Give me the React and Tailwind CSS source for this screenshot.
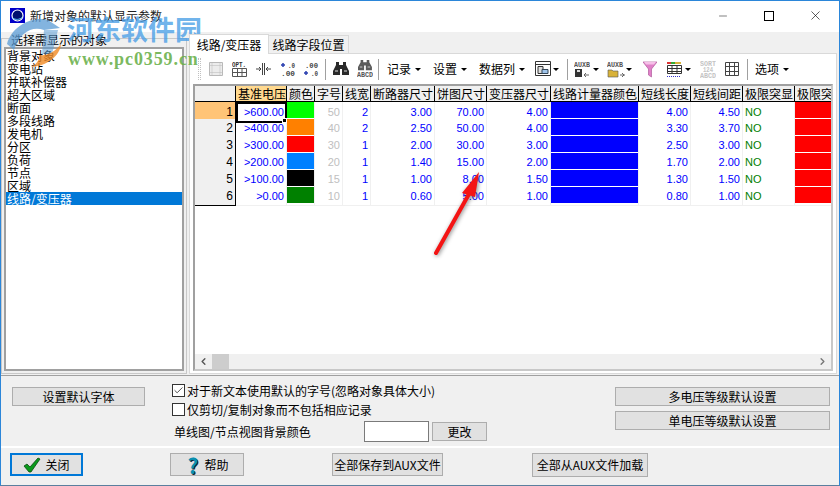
import { X, Minus, Check, ChevronLeft, ChevronRight } from 'lucide-react';

const CJK = "font-['Noto_Sans_CJK_SC','Liberation_Sans',sans-serif]";
const NUM = "font-['Liberation_Sans','Noto_Sans_CJK_SC',sans-serif]";

const LIST = ['背景对象', '变电站', '并联补偿器', '超大区域', '断面', '多段线路', '发电机', '分区', '负荷', '节点', '区域', '线路/变压器'];

const HEADERS = ['', '基准电压', '颜色', '字号', '线宽', '断路器尺寸', '饼图尺寸', '变压器尺寸', '线路计量器颜色', '短线长度', '短线间距', '极限突显', '极限突'];

const ROWS = [
  ['>600.00', '#00ff00', '50', '2', '3.00', '70.00', '4.00', '4.00', '4.50'],
  ['>400.00', '#ff8000', '40', '2', '2.50', '50.00', '4.00', '3.30', '3.70'],
  ['>300.00', '#ff0000', '30', '1', '2.00', '30.00', '3.00', '2.50', '3.00'],
  ['>200.00', '#0080ff', '20', '1', '1.40', '15.00', '2.00', '1.70', '2.00'],
  ['>100.00', '#000000', '15', '1', '1.00', '8.00', '1.50', '1.30', '1.50'],
  ['>0.00', '#008000', '10', '1', '0.60', '5.00', '1.00', '0.80', '1.00'],
];

const GRID_COLS = 'grid grid-cols-[41px_51px_28px_28px_28px_64px_52px_64px_88px_52px_52px_52px_37px]';

function Btn({ className = '', children }) {
  return (
    <div className={`flex items-center justify-center border border-[#adadad] bg-[#e1e1e1] text-[12px] text-black ${className}`}>
      {children}
    </div>
  );
}

function Caret({ className = 'ml-[4px]' }) {
  return <span className={`inline-block shrink-0 border-x-[3px] border-t-[3px] border-x-transparent border-t-black ${className}`} />;
}

function Sep({ className = '' }) {
  return <span className={`h-[21px] w-px shrink-0 bg-[#a0a0a0] ${className}`} />;
}

function Micro({ x = 0, y, w, size = 8, fill = '#444', children }) {
  return (
    <text x={x} y={y} fontSize={size} fontWeight="700" fill={fill} stroke="none" fontFamily="Liberation Mono" textLength={w} lengthAdjust="spacingAndGlyphs">
      {children}
    </text>
  );
}

function Binoculars({ sub }) {
  const c = sub ? '#5a5a5a' : '#2a2a2a';
  return (
    <svg width="16" height="18" viewBox="0 0 16 18">
      <g transform={sub ? 'translate(1 0) scale(.87 .78)' : 'translate(0 2)'}>
        <path d="M3 0h3v3h4V0h3v3l3 6v4H9V7H7v6H0V9l3-6z" fill={c} />
        <path d="M2 9h3M11 9h3" stroke="#ddd" />
      </g>
      {sub && <Micro y={17} w={16} size={7} fill="#555">ABCD</Micro>}
    </svg>
  );
}

function Toolbar() {
  return (
    <div className={`flex h-[30px] items-center pl-[8px] text-[12px] text-black ${CJK}`}>
      <span className="h-[22px] w-[3px] shrink-0 border-x border-dotted border-[#c0c0c0]" />
      <svg className="ml-[7px] shrink-0" width="16" height="16" viewBox="0 0 16 16" fill="#ececec" stroke="#b9b9b9">
        <path d="M1.500 1.500h13v13h-13z" />
        <path d="M1.500 4.500h13M1.500 11.500h13M4 1.500v13M12 1.500v13" strokeDasharray="1 1" />
      </svg>
      <svg className="ml-[8px] shrink-0" width="16" height="16" viewBox="0 0 16 16" fill="none" stroke="#555">
        <Micro y={6} w={14} size={7} fill="#333">OPT.</Micro>
        <path d="M.5 7.500h14v8H.5zM.5 11.500h14M5.500 7.500v8M10 7.500v8" />
      </svg>
      <svg className="ml-[7px] shrink-0" width="16" height="14" viewBox="0 0 16 14" fill="none" stroke="#444">
        <path d="M7.500 1v12M9.500 1v12M1 7h5M11 7h5M4 5l2 2-2 2M13 5l-2 2 2 2" />
      </svg>
      <svg className="ml-[9px] shrink-0" width="16" height="14" viewBox="0 0 16 14">
        <path d="M3 1v4M1 3h4" stroke="#2a3fb0" strokeWidth="1.500" />
        <Micro x={8} y={6} w={7} size={8}>.0</Micro>
        <Micro x={1} y={14} w={14} size={8}>.00</Micro>
      </svg>
      <svg className="ml-[7px] shrink-0" width="16" height="14" viewBox="0 0 16 14">
        <path d="M3 9v4M1 11h4" stroke="#2a3fb0" strokeWidth="1.500" />
        <Micro x={2} y={6} w={13} size={8}>.00</Micro>
        <Micro x={8} y={14} w={7} size={8}>.0</Micro>
      </svg>
      <Sep className="ml-[6px]" />
      <span className="ml-[7px] shrink-0"><Binoculars /></span>
      <span className="ml-[8px] shrink-0"><Binoculars sub /></span>
      <Sep className="ml-[5px]" />
      <span className="ml-[8px] shrink-0">记录</span>
      <Caret />
      <span className="ml-[12px] shrink-0">设置</span>
      <Caret />
      <span className="ml-[12px] shrink-0">数据列</span>
      <Caret />
      <svg className="ml-[10px] shrink-0" width="16" height="16" viewBox="0 0 16 16" fill="none" stroke="#333">
        <path d="M.5 .5h15v14H.5zM.5 3.500h15" />
        <path d="M3 5.500h5v7H3z" fill="#ddd" />
        <path d="M7 8.500h6v4H7z" fill="#9fc4ea" stroke="#345" />
      </svg>
      <Caret className="ml-[2px]" />
      <Sep className="ml-[8px]" />
      <svg className="ml-[6px] shrink-0" width="16" height="17" viewBox="0 0 16 17">
        <Micro y={6} w={16} fill="#555">AUXB</Micro>
        <path d="M1 8h7v8H1z" fill="#333" />
        <path d="M3 9h3v2H3z" fill="#ddd" />
        <path d="M10 14h5M12 12l-2 2 2 2" stroke="#666" fill="none" />
      </svg>
      <Caret className="ml-[3px]" />
      <svg className="ml-[8px] shrink-0" width="18" height="17" viewBox="0 0 18 17">
        <Micro y={6} w={16} fill="#555">AUXB</Micro>
        <path d="M1 9h4l1 1h5v6H1z" fill="#d8b23a" stroke="#555" strokeWidth=".6" />
        <path d="M13 14h5M15 12l2 2-2 2" stroke="#666" fill="none" />
      </svg>
      <Caret className="ml-[1px]" />
      <svg className="ml-[11px] shrink-0" width="14" height="17" viewBox="0 0 14 17">
        <path d="M0 1h14L8.500 8v8l-3-2V8z" fill="#e080c8" stroke="#b05a9c" strokeWidth=".7" />
        <path d="M1 1h12l-2 2.500H3z" fill="#f6c0e8" />
      </svg>
      <svg className="ml-[10px] shrink-0" width="15" height="17" viewBox="0 0 15 17" fill="none" stroke="#333">
        <path d="M0 2h4" stroke="#d33" strokeWidth="2" />
        <path d="M4 2h4" stroke="#3a3" strokeWidth="2" />
        <path d="M8 2h6" stroke="#d8b23a" strokeWidth="2" />
        <path d="M.5 4.500h14v8H.5zM.5 7.500h14M.5 10.500h14M5 4.500v8M10 4.500v8" />
        <path d="M0 15.500h14" stroke="#33c" strokeDasharray="1 1" />
      </svg>
      <Caret className="ml-[3px]" />
      <svg className="ml-[9px] shrink-0" width="16" height="18" viewBox="0 0 16 18">
        <Micro y={5.500} w={16} size={7} fill="#c4c4c4">SORT</Micro>
        <Micro x={3} y={11.500} w={10} size={7} fill="#c4c4c4">124</Micro>
        <Micro y={17.500} w={16} size={7} fill="#c4c4c4">ABCD</Micro>
      </svg>
      <svg className="ml-[9px] shrink-0" width="14" height="14" viewBox="0 0 14 14" fill="none" stroke="#444">
        <path d="M.5 .5h13v13H.5zM.5 4.500h13M.5 9.500h13M4.500 .5v13M9.500 .5v13" />
      </svg>
      <Sep className="ml-[8px]" />
      <span className="ml-[7px] shrink-0">选项</span>
      <Caret />
    </div>
  );
}

function Num({ children, cls = 'text-[#0000ff]' }) {
  return (
    <div className={`flex items-center justify-end border-r border-b border-[#f0f0f0] bg-white pr-[2px] text-[11px] ${NUM} ${cls}`}>
      {children}
    </div>
  );
}

function Swatch({ color }) {
  return (
    <div className="border-r border-b border-[#f0f0f0] bg-white">
      <div className="h-[16px] w-full" style={{ backgroundColor: color }} />
    </div>
  );
}

function DataGrid() {
  return (
    <div className="mx-[3px] flex min-h-0 flex-1 flex-col border-2 border-[#a0a0a0] border-r-[#c8c8c8] border-b-[#c8c8c8] bg-white">
      <div className="min-h-0 flex-1 overflow-hidden">
        <div className={`${GRID_COLS} h-[16px] text-[12px] leading-[15px] text-black ${CJK}`}>
          {HEADERS.map((h, i) => (
            <div
              key={i}
              className={`overflow-hidden border-b border-black pl-[2px] whitespace-nowrap ${i === 1 ? 'bg-[#ffd98f]' : 'bg-[#f0f0f0]'} ${i === 12 ? '' : 'border-r'}`}
            >
              {h}
            </div>
          ))}
        </div>
        {ROWS.map((r, i) => (
          <div key={i} className={`${GRID_COLS} h-[17px]`}>
            <div className={`flex items-center justify-end border-r border-b border-black pr-[2px] text-[12px] text-black ${NUM} ${i === 0 ? 'bg-[#ffc477]' : 'bg-[#f0f0f0]'}`}>
              {i + 1}
            </div>
            {i === 0 ? (
              <div className={`relative flex items-center justify-end border-2 border-black bg-white pr-[1px] text-[11px] text-[#0000ff] ${NUM}`}>
                {r[0]}
                <span className="absolute -right-[2px] -bottom-[2px] h-[5px] w-[5px] border border-white bg-black" />
              </div>
            ) : (
              <Num>{r[0]}</Num>
            )}
            <Swatch color={r[1]} />
            <Num cls="text-[#c0c0c0]">{r[2]}</Num>
            <Num>{r[3]}</Num>
            <Num>{r[4]}</Num>
            <Num>{r[5]}</Num>
            <Num>{r[6]}</Num>
            <Swatch color="#0000ff" />
            <Num>{r[7]}</Num>
            <Num>{r[8]}</Num>
            <div className={`flex items-center border-r border-b border-[#f0f0f0] bg-white pl-[2px] text-[11px] text-[#008000] ${NUM}`}>NO</div>
            <Swatch color="#ff0000" />
          </div>
        ))}
      </div>
      <div className="flex h-[15px] shrink-0 items-center bg-[#f0f0f0]">
        <span className="flex h-[15px] w-[17px] items-center justify-center"><ChevronLeft size={11} strokeWidth={3} color="#555" /></span>
        <span className="h-[15px] w-[17px] bg-[#cdcdcd]" />
        <span className="flex-1" />
        <span className="flex h-[15px] w-[17px] items-center justify-center"><ChevronRight size={11} strokeWidth={3} color="#777" /></span>
      </div>
    </div>
  );
}

function TitleBar() {
  return (
    <div className="flex h-[32px] shrink-0 items-center border-t border-[#2b86d9] bg-white pb-[2px]">
      <svg className="ml-[9px]" width="15" height="15" viewBox="0 0 15 15">
        <path d="M0 0h15v15H0z" fill="#0000c8" />
        <circle cx="7.500" cy="7.500" r="5.500" fill="#001070" stroke="#fff" strokeWidth="1.200" />
        <path d="M2.500 10c3 2 7 2 10-1" stroke="#6cf" fill="none" />
      </svg>
      <span className={`ml-[5px] text-[12px] text-[#222] ${CJK}`}>新增对象的默认显示参数</span>
      <div className="ml-auto flex h-full pr-[1px]">
        <span className="flex w-[46px] items-center justify-center"><Minus size={12} strokeWidth={1} color="#000" /></span>
        <span className="flex w-[46px] items-center justify-center"><span className="h-[10px] w-[10px] border border-black" /></span>
        <span className="flex w-[46px] items-center justify-center"><X size={15} strokeWidth={1} color="#000" /></span>
      </div>
    </div>
  );
}

function Watermark() {
  return (
    <div className="pointer-events-none absolute top-[12px] left-[3px] h-[58px] w-[200px]">
      <svg className="absolute top-0 left-0" width="62" height="58" viewBox="0 0 62 58">
        <path d="M3 32C8 14 28 4 44 8l12 8-16 2C28 14 16 20 10 38z" fill="#5a9bd4" opacity=".75" />
        <path d="M40 18h14l-6 24h-10z" fill="#5a9bd4" opacity=".55" />
        <path d="M57 32c-1 12-14 22-30 23 6-3 9-8 8-12 8 1 16-3 22-11z" fill="#f08a24" opacity=".8" />
      </svg>
      <span className={`absolute top-0 left-[63px] text-[27px] leading-[34px] font-bold whitespace-nowrap text-[#4a9fe6]/80 ${CJK}`}>河东软件园</span>
      <span className="absolute top-[37px] left-[64px] font-['Liberation_Serif',serif] text-[18px] leading-[20px] font-bold tracking-[0.9px] whitespace-nowrap text-[#6ab04a]/90">www.pc0359.cn</span>
    </div>
  );
}

export default function App() {
  return (
    <div className={`relative flex h-[486px] w-[840px] flex-col overflow-hidden border-x border-b border-[#2b86d9] border-b-[#5a7f9e] bg-[#f0f0f0] ${CJK}`}>
      <TitleBar />
      <div className="flex h-[344px] shrink-0 border-b border-[#a0a0a0] pb-[1px]">
        {/* object list */}
        <div className="flex w-[186px] shrink-0 flex-col pt-[6px]">
          <div className="relative flex flex-1 flex-col border border-[#c8c8c8] px-[2px] pt-[8px] pb-[2px]">
            <span className="absolute -top-[6px] left-[7px] bg-[#f0f0f0] px-[2px] text-[12px] leading-[13px] text-black">选择需显示的对象</span>
            <div className="flex-1 border-2 border-[#a0a0a0] bg-white text-[12px] text-black">
              {LIST.map((name, i) => (
                <div key={name} className={`h-[13px] pl-[1px] leading-[13px] ${i === LIST.length - 1 ? 'bg-[#0078d7] text-white' : ''}`}>{name}</div>
              ))}
            </div>
          </div>
        </div>
        {/* tabbed grid */}
        <div className="mr-[2px] ml-[2px] flex min-w-0 flex-1 flex-col pt-[1px]">
          <div className="flex h-[20px] shrink-0 items-end text-[12px] text-black">
            <span className="z-10 -mb-px flex h-[20px] w-[80px] items-center justify-center border-x border-t border-[#d9d9d9] bg-white">线路/变压器</span>
            <span className="flex h-[18px] w-[80px] items-center justify-center border-t border-r border-[#d9d9d9] bg-[#f0f0f0]">线路字段位置</span>
          </div>
          <div className="flex min-h-0 flex-1 flex-col border border-[#d9d9d9] bg-white pb-[2px]">
            <Toolbar />
            <DataGrid />
          </div>
        </div>
      </div>
      {/* options */}
      <div className="flex h-[72px] shrink-0 border-b-2 border-white">
        <div className="w-[165px] shrink-0 pt-[11px] pl-[11px]">
          <Btn className="h-[19px] w-[133px]">设置默认字体</Btn>
        </div>
        <div className="flex w-[440px] shrink-0 flex-col pt-[5px] text-[12px] text-black">
          <label className="ml-[6px] flex h-[19px] items-center gap-[2px]">
            <span className="flex h-[13px] w-[13px] items-center justify-center border border-[#333] bg-white"><Check size={11} strokeWidth={2} color="#444" /></span>
            对于新文本使用默认的字号(忽略对象具体大小)
          </label>
          <label className="ml-[6px] flex h-[19px] items-center gap-[2px]">
            <span className="h-[13px] w-[13px] border border-[#333] bg-white" />
            仅剪切/复制对象而不包括相应记录
          </label>
          <div className="mt-[2px] flex items-center pl-[8px]">
            <span className="w-[190px]">单线图/节点视图背景颜色</span>
            <span className="h-[21px] w-[65px] border border-[#7a7a7a] bg-white" />
            <Btn className="ml-[3px] h-[19px] w-[55px]">更改</Btn>
          </div>
        </div>
        <div className="ml-[9px] flex flex-col gap-[5px] pt-[11px]">
          <Btn className="h-[19px] w-[215px]">多电压等级默认设置</Btn>
          <Btn className="h-[19px] w-[215px]">单电压等级默认设置</Btn>
        </div>
      </div>
      {/* bottom buttons */}
      <div className="flex flex-1 items-start pt-[5px]">
        <Btn className="ml-[9px] h-[23px] w-[73px] gap-[4px] border-2 !border-[#0078d7]">
          <svg width="18" height="16" viewBox="0 0 18 16"><path d="M1 9l3-2 3 3 8-9 2 1-9 13H6z" fill="#0a9a1c" stroke="#0a4a10" strokeWidth=".8" /></svg>
          关闭
        </Btn>
        <Btn className="ml-[87px] h-[23px] w-[74px] gap-[6px] pl-[2px]">
          <span className="text-[21px] leading-[20px] font-bold text-[#0a8fb0] [text-shadow:1px_1px_0_#123]">?</span>
          帮助
        </Btn>
        <Btn className="ml-[88px] h-[23px] w-[111px]">全部保存到AUX文件</Btn>
        <Btn className="ml-[89px] h-[24px] w-[116px]">全部从AUX文件加载</Btn>
      </div>
      <Watermark />
      {/* red arrow pasted on the screenshot */}
      <svg className="pointer-events-none absolute top-[170px] left-[424px] drop-shadow-[1px_1px_2px_rgba(0,0,0,0.45)]" width="60" height="90" viewBox="0 0 60 90">
        <path d="M44 24L11 83" stroke="#f41414" strokeWidth="4" strokeLinecap="round" />
        <path d="M54 2L37 23l13 4z" fill="#f41414" />
      </svg>
    </div>
  );
}
